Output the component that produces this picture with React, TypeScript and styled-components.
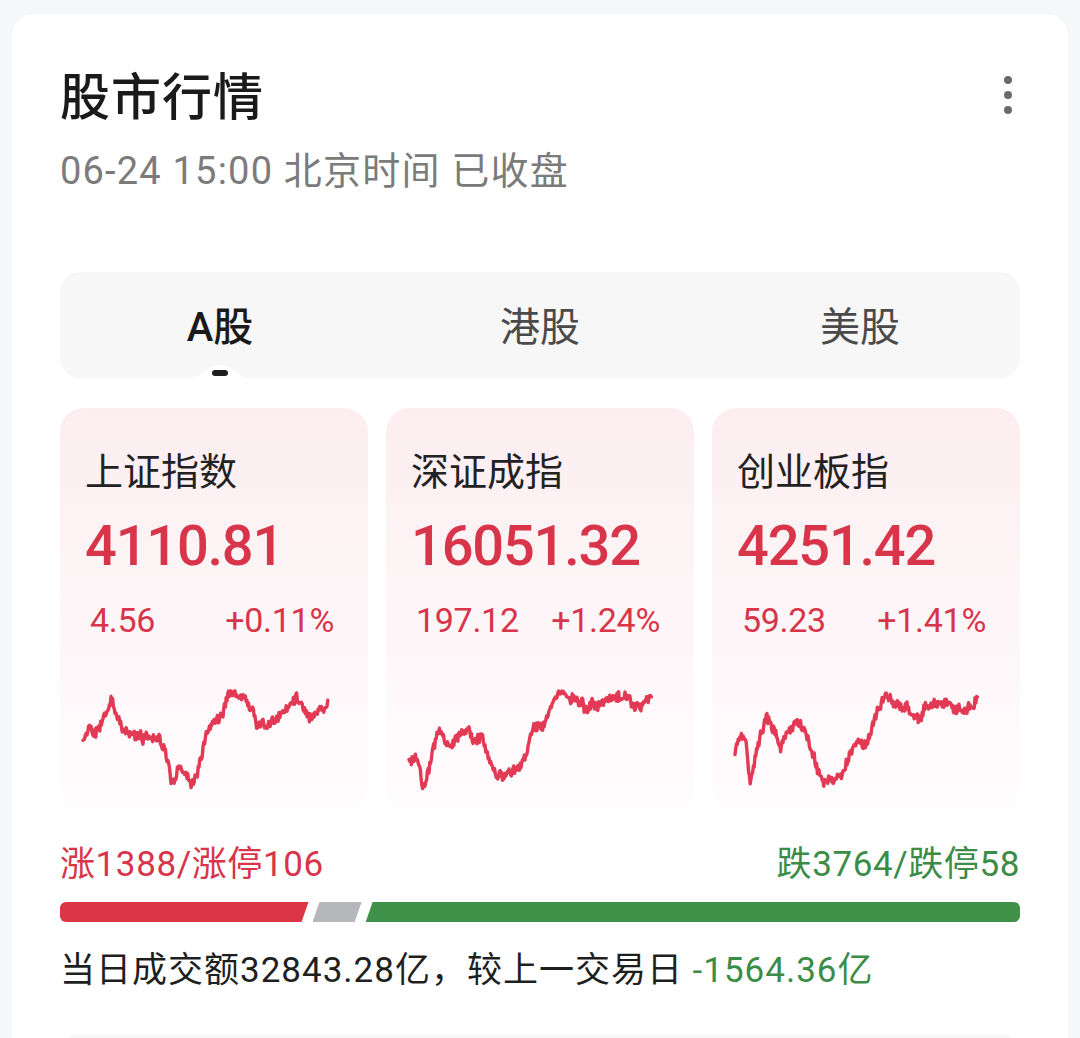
import React from 'react';
import styled, { createGlobalStyle } from 'styled-components';

const GlobalStyle = createGlobalStyle`
  html, body {
    margin: 0;
    padding: 0;
    background: #f6f7f9;
  }
  body {
    font-family: Roboto, "Noto Sans CJK SC", sans-serif;
    color: #1f1f1f;
  }
`;

type Index = {
  name: string;
  value: string;
  change: string;
  percent: string;
  anchors: [number, number][];
  seed: number;
};

const INDICES: Index[] = [
  {
    name: '上证指数',
    value: '4110.81',
    change: '4.56',
    percent: '+0.11%',
    seed: 11,
    anchors: [
      [0, 52], [6, 40], [12, 46], [20, 32], [29, 12], [36, 36], [48, 46], [62, 50],
      [76, 52], [82, 62], [90, 96], [97, 80], [104, 90], [110, 97], [118, 70], [125, 40],
      [137, 32], [146, 8], [160, 8], [168, 22], [175, 40], [186, 38], [198, 26], [214, 12],
      [222, 24], [228, 32], [238, 22], [245, 16],
    ],
  },
  {
    name: '深证成指',
    value: '16051.32',
    change: '197.12',
    percent: '+1.24%',
    seed: 23,
    anchors: [
      [0, 77], [6, 68], [10, 74], [14, 98], [20, 80], [29, 42], [36, 52], [43, 57],
      [52, 48], [59, 42], [66, 52], [73, 50], [83, 80], [89, 88], [100, 84], [109, 83],
      [116, 70], [124, 42], [136, 35], [144, 12], [151, 5], [163, 8], [173, 13], [176, 23],
      [189, 15], [203, 12], [216, 8], [226, 20], [233, 18], [243, 6],
    ],
  },
  {
    name: '创业板指',
    value: '4251.42',
    change: '59.23',
    percent: '+1.41%',
    seed: 37,
    anchors: [
      [0, 62], [6, 45], [11, 53], [15, 97], [22, 60], [31, 30], [41, 47], [46, 63],
      [51, 50], [61, 32], [71, 43], [81, 77], [89, 93], [97, 95], [107, 88], [121, 53],
      [131, 57], [142, 20], [151, 7], [157, 13], [171, 20], [184, 30], [191, 17], [211, 13],
      [221, 23], [231, 22], [237, 18], [243, 6],
    ],
  },
];

const CHART_W = 247;
const CHART_H = 104;

function mulberry32(seed: number) {
  let a = seed;
  return () => {
    a |= 0;
    a = (a + 0x6d2b79f5) | 0;
    let t = Math.imul(a ^ (a >>> 15), 1 | a);
    t = (t + Math.imul(t ^ (t >>> 7), 61 | t)) ^ t;
    return ((t ^ (t >>> 14)) >>> 0) / 4294967296;
  };
}

// anchors give the rough shape, the prng adds the tick-by-tick jitter
function buildPath(anchors: [number, number][], seed: number) {
  const rand = mulberry32(seed);
  const pts: string[] = [];
  let drift = 0;
  for (let x = 0; x <= anchors[anchors.length - 1][0]; x += 0.8) {
    let i = 0;
    while (i < anchors.length - 2 && anchors[i + 1][0] < x) i++;
    const [x0, y0] = anchors[i];
    const [x1, y1] = anchors[i + 1];
    const t = Math.min(1, Math.max(0, (x - x0) / (x1 - x0)));
    const base = y0 + (y1 - y0) * t;
    drift = drift * 0.7 + (rand() - 0.5) * 4;
    const y = Math.min(CHART_H - 3, Math.max(3, base + drift + (rand() - 0.5) * 9));
    pts.push(`${(x + 2).toFixed(1)},${(y + 2).toFixed(1)}`);
  }
  return 'M' + pts.join(' L');
}

const Page = styled.div`
  padding: 14px 12px 0;
  height: 1038px;
  box-sizing: border-box;
  overflow: hidden;
`;

const Panel = styled.section`
  background: #ffffff;
  border-radius: 22px;
  padding: 54px 48px 0;
  min-height: 1100px;
  box-sizing: border-box;
`;

const Header = styled.header`
  display: flex;
  justify-content: space-between;
  align-items: flex-start;
  height: 60px;
`;

const Title = styled.h1`
  margin: 0;
  font-size: 50px;
  line-height: 60px;
  font-weight: 500;
  color: #1a1a1a;
  letter-spacing: 1px;
`;

const MoreButton = styled.button`
  border: 0;
  background: none;
  padding: 10px 4px;
  margin: -2px 4px 0 0;
  display: flex;
  flex-direction: column;
  gap: 7px;
  cursor: pointer;
`;

const Dot = styled.span`
  width: 8px;
  height: 8px;
  border-radius: 50%;
  background: #6b6b6b;
`;

const Subtitle = styled.div`
  margin-top: 18px;
  font-size: 38px;
  line-height: 50px;
  letter-spacing: 1.2px;
  color: #7b7b7b;
`;

const Tabs = styled.nav`
  margin-top: 76px;
  height: 106px;
  background: #f7f7f7;
  border-radius: 20px;
  display: grid;
  grid-template-columns: repeat(3, 1fr);
`;

const Tab = styled.div<{ $active?: boolean }>`
  position: relative;
  display: flex;
  align-items: center;
  justify-content: center;
  padding-bottom: 2px;
  font-size: 40px;
  font-weight: ${p => (p.$active ? 500 : 400)};
  color: ${p => (p.$active ? '#1a1a1a' : '#4a4a4a')};
`;

const Notch = styled.svg`
  position: absolute;
  bottom: 0;
  left: 50%;
  transform: translateX(-50%);
  width: 64px;
  height: 14px;
`;

const Indicator = styled.span`
  position: absolute;
  bottom: 2px;
  left: 50%;
  transform: translateX(-50%);
  width: 16px;
  height: 6px;
  border-radius: 3px;
  background: #1e1e1e;
`;

const Cards = styled.div`
  margin-top: 30px;
  display: grid;
  grid-template-columns: repeat(3, 1fr);
  gap: 18px;
`;

const Card = styled.div`
  border-radius: 24px;
  background: linear-gradient(180deg, #fcedf0 0%, #fdf5f7 45%, #fffcfd 100%);
  padding: 40px 26px 0 25px;
  height: 402px;
  box-sizing: border-box;
`;

const CardName = styled.div`
  font-size: 38px;
  line-height: 48px;
  color: #222222;
`;

const CardValue = styled.div`
  margin-top: 18px;
  font-size: 56px;
  line-height: 64px;
  letter-spacing: -1.2px;
  font-weight: 500;
  color: #d8344a;
`;

const ChangeRow = styled.div`
  margin-top: 20px;
  padding: 0 8px 0 5px;
  display: flex;
  justify-content: space-between;
  font-size: 34px;
  line-height: 44px;
  letter-spacing: -0.3px;
  color: #d8344a;
`;

const Spark = styled.svg`
  display: block;
  margin: 44px 0 0 -4px;
`;

const StatsRow = styled.div`
  margin-top: 32px;
  display: flex;
  justify-content: space-between;
  font-size: 35px;
  line-height: 46px;
  letter-spacing: 0.6px;
`;

const Stat = styled.span<{ $tone: 'up' | 'down' }>`
  color: ${p => (p.$tone === 'up' ? '#d8344a' : '#3b8c47')};
`;

const Breadth = styled.div`
  margin-top: 14px;
  display: flex;
  gap: 4px;
  height: 20px;
`;

const Segment = styled.div<{ $color: string; $grow: number; $edge: 'left' | 'mid' | 'right' }>`
  flex: ${p => p.$grow} 1 0;
  background: ${p => p.$color};
  border-radius: ${p => (p.$edge === 'left' ? '6px 0 0 6px' : p.$edge === 'right' ? '0 6px 6px 0' : '0')};
  clip-path: ${p =>
    p.$edge === 'left'
      ? 'polygon(0 0, 100% 0, calc(100% - 7px) 100%, 0 100%)'
      : p.$edge === 'right'
      ? 'polygon(7px 0, 100% 0, 100% 100%, 0 100%)'
      : 'polygon(7px 0, 100% 0, calc(100% - 7px) 100%, 0 100%)'};
`;

const Turnover = styled.div`
  margin-top: 24px;
  font-size: 35px;
  line-height: 50px;
  letter-spacing: 1px;
  color: #1f1f1f;
`;

const Delta = styled.span`
  color: #3b8c47;
`;

const NextBlock = styled.div`
  margin-top: 38px;
  height: 80px;
  border-radius: 20px 20px 0 0;
  background: #f8f8f8;
`;

const Sparkline: React.FC<{ index: Index }> = ({ index }) => (
  <Spark width={CHART_W + 4} height={CHART_H + 4} viewBox={`0 0 ${CHART_W + 4} ${CHART_H + 4}`}>
    <path
      d={buildPath(index.anchors, index.seed)}
      fill="none"
      stroke="#e23a55"
      strokeWidth={3.4}
      strokeLinejoin="round"
      strokeLinecap="round"
    />
  </Spark>
);

const tabs = ['A股', '港股', '美股'];

export default function App() {
  return (
    <Page>
      <GlobalStyle />
      <Panel>
        <Header>
          <Title>股市行情</Title>
          <MoreButton aria-label="更多">
            <Dot />
            <Dot />
            <Dot />
          </MoreButton>
        </Header>
        <Subtitle>06-24 15:00 北京时间 已收盘</Subtitle>

        <Tabs>
          {tabs.map((t, i) => (
            <Tab key={t} $active={i === 0}>
              {t}
              {i === 0 && (
                <>
                  <Notch viewBox="0 0 64 14">
                    <path d="M0 14 C16 14 18 1 32 1 C46 1 48 14 64 14 Z" fill="#ffffff" />
                  </Notch>
                  <Indicator />
                </>
              )}
            </Tab>
          ))}
        </Tabs>

        <Cards>
          {INDICES.map(idx => (
            <Card key={idx.name}>
              <CardName>{idx.name}</CardName>
              <CardValue>{idx.value}</CardValue>
              <ChangeRow>
                <span>{idx.change}</span>
                <span>{idx.percent}</span>
              </ChangeRow>
              <Sparkline index={idx} />
            </Card>
          ))}
        </Cards>

        <StatsRow>
          <Stat $tone="up">涨1388/涨停106</Stat>
          <Stat $tone="down">跌3764/跌停58</Stat>
        </StatsRow>
        <Breadth>
          <Segment $color="#dc3545" $grow={248} $edge="left" />
          <Segment $color="#b6b7ba" $grow={49} $edge="mid" />
          <Segment $color="#3f9049" $grow={653} $edge="right" />
        </Breadth>

        <Turnover>
          当日成交额32843.28亿，较上一交易日 <Delta>-1564.36亿</Delta>
        </Turnover>
        <NextBlock />
      </Panel>
    </Page>
  );
}
